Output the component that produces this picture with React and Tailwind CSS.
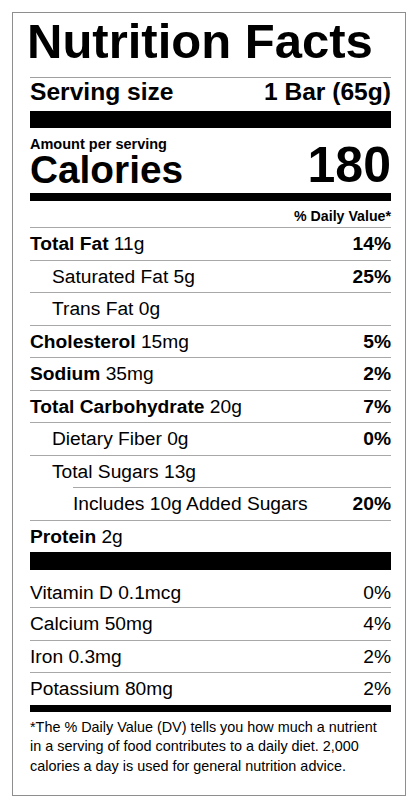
import React from 'react';

const nutrients = [
  { name: 'Total Fat', amount: '11g', pct: '14%', bold: true },
  { name: 'Saturated Fat', amount: '5g', pct: '25%', indent: 1 },
  { name: 'Trans Fat', amount: '0g', pct: '', indent: 1 },
  { name: 'Cholesterol', amount: '15mg', pct: '5%', bold: true },
  { name: 'Sodium', amount: '35mg', pct: '2%', bold: true },
  { name: 'Total Carbohydrate', amount: '20g', pct: '7%', bold: true },
  { name: 'Dietary Fiber', amount: '0g', pct: '0%', indent: 1 },
  { name: 'Total Sugars', amount: '13g', pct: '', indent: 1 },
  { name: 'Includes 10g Added Sugars', amount: '', pct: '20%', indent: 2 },
  { name: 'Protein', amount: '2g', pct: '', bold: true },
];

const vitamins = [
  { name: 'Vitamin D', amount: '0.1mcg', pct: '0%' },
  { name: 'Calcium', amount: '50mg', pct: '4%' },
  { name: 'Iron', amount: '0.3mg', pct: '2%' },
  { name: 'Potassium', amount: '80mg', pct: '2%' },
];

const NutrientRow = ({ item }) => {
  const indentClass =
    item.indent === 2 ? 'ml-[43px]' : item.indent === 1 ? 'pl-[22px]' : '';
  return (
    <div
      className={`flex h-[32.5px] justify-between border-t border-[#a8a8a8] text-[19.2px] leading-[31.5px] ${indentClass}`}
    >
      <span>
        {item.bold ? <span className="font-bold">{item.name}</span> : item.name}
        {item.amount && ` ${item.amount}`}
      </span>
      <span className="font-bold">{item.pct}</span>
    </div>
  );
};

const VitaminRow = ({ item, first }) => (
  <div
    className={
      first
        ? 'flex h-[37.3px] justify-between pt-[6.7px] text-[19.2px] leading-[31.5px]'
        : 'flex h-[32.5px] justify-between border-t border-[#a8a8a8] text-[19.2px] leading-[31.5px]'
    }
  >
    <span>
      {item.name} {item.amount}
    </span>
    <span>{item.pct}</span>
  </div>
);

const App = () => {
  return (
    <div className="min-h-[800px] bg-white pt-[12px] font-['Liberation_Sans',Arial,sans-serif] text-black">
      <div className="ml-[12px] w-[394px] border border-[#8e8e8e] pb-[19px] pl-[17px] pr-[14px]">
        <h1 className="ml-[-3px] text-[49px] font-bold leading-[56px]">Nutrition Facts</h1>
        <div className="mt-[8px] h-px bg-[#a0a0a0]" />

        <div className="flex h-[27px] justify-between text-[24.6px] font-bold leading-[27.4px]">
          <span>Serving size</span>
          <span>1 Bar (65g)</span>
        </div>
        <div className="mt-[6px] h-[17px] bg-black" />

        <div className="mt-[7px] flex items-end justify-between font-bold">
          <div>
            <div className="text-[14.5px] leading-[18px]">Amount per serving</div>
            <div className="text-[38.8px] leading-[34px]">Calories</div>
          </div>
          <div className="text-[50px] leading-[42.6px]">180</div>
        </div>
        <div className="mt-[6px] h-[8px] bg-black" />

        <div className="h-[26px] pt-[5px] text-right text-[14.2px] font-bold leading-[21px]">
          % Daily Value*
        </div>

        {nutrients.map((item) => (
          <NutrientRow key={item.name} item={item} />
        ))}
        <div className="h-[18px] bg-black" />

        {vitamins.map((item, i) => (
          <VitaminRow key={item.name} item={item} first={i === 0} />
        ))}
        <div className="h-[7px] bg-black" />

        <p className="pt-[6px] text-[14.4px] leading-[19.4px]">
          *The % Daily Value (DV) tells you how much a nutrient
          <br />
          in a serving of food contributes to a daily diet. 2,000
          <br />
          calories a day is used for general nutrition advice.
        </p>
      </div>
    </div>
  );
};

export default App;
